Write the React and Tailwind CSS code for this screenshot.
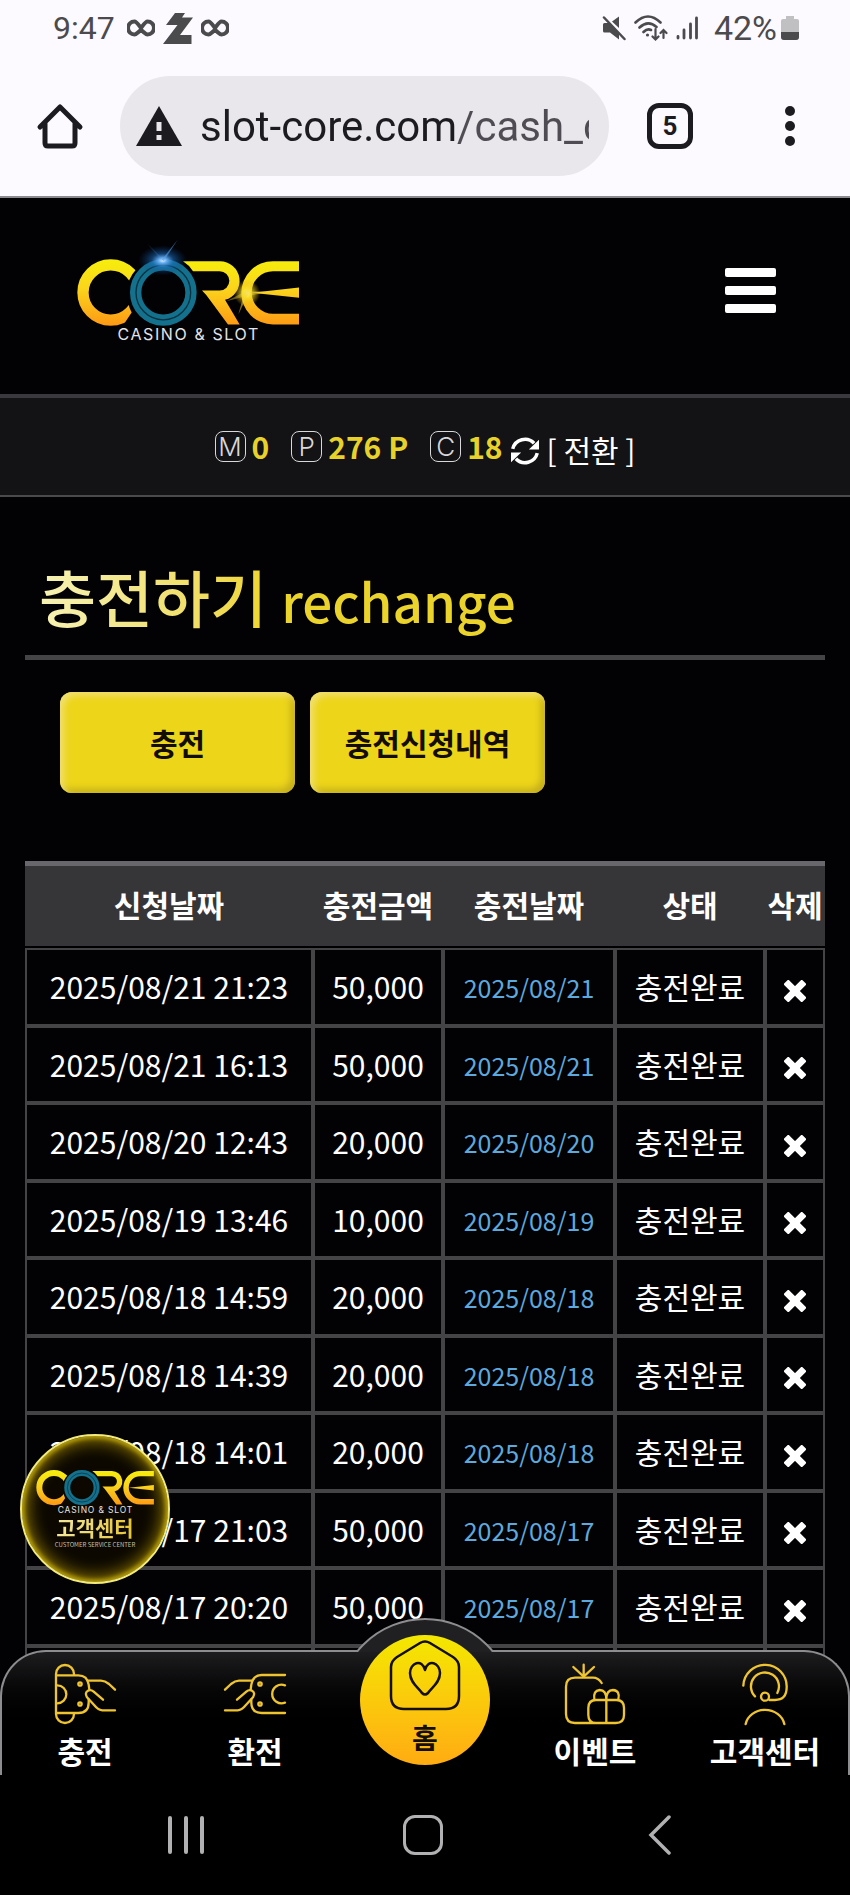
import React, { useId, useState } from "react";

const rows = [
  { requested: "2025/08/21 21:23", amount: "50,000", charged: "2025/08/21" },
  { requested: "2025/08/21 16:13", amount: "50,000", charged: "2025/08/21" },
  { requested: "2025/08/20 12:43", amount: "20,000", charged: "2025/08/20" },
  { requested: "2025/08/19 13:46", amount: "10,000", charged: "2025/08/19" },
  { requested: "2025/08/18 14:59", amount: "20,000", charged: "2025/08/18" },
  { requested: "2025/08/18 14:39", amount: "20,000", charged: "2025/08/18" },
  { requested: "2025/08/18 14:01", amount: "20,000", charged: "2025/08/18" },
  { requested: "2025/08/17 21:03", amount: "50,000", charged: "2025/08/17" },
  { requested: "2025/08/17 20:20", amount: "50,000", charged: "2025/08/17" },
];

const Logo = ({ className, flare }) => {
  const id = useId();

  return (
    <svg viewBox="100 50 690 320" className={className} role="img" aria-label="CORE">
      <defs>
        <linearGradient id={`${id}gold`} gradientUnits="userSpaceOnUse" x1="0" y1="118" x2="0" y2="314">
          <stop offset="0" stopColor="#f6ee0c" />
          <stop offset="0.45" stopColor="#fbd41c" />
          <stop offset="1" stopColor="#fd9a14" />
        </linearGradient>
        <radialGradient id={`${id}blue`}>
          <stop offset="0" stopColor="#eaf6ff" />
          <stop offset="0.15" stopColor="#6fb4f4" />
          <stop offset="0.45" stopColor="#1c6fc0" stopOpacity="0.55" />
          <stop offset="1" stopColor="#0b3f80" stopOpacity="0" />
        </radialGradient>
        <radialGradient id={`${id}sun`}>
          <stop offset="0" stopColor="#fffbd0" />
          <stop offset="0.3" stopColor="#f9e62a" stopOpacity="0.85" />
          <stop offset="1" stopColor="#e8b010" stopOpacity="0" />
        </radialGradient>
        <clipPath id={`${id}c`}>
          <path d="M100 100H240L290 146Q262 175 262 216Q262 250 276 276L240 330H100Z" />
        </clipPath>
      </defs>
      <circle
        cx="213"
        cy="216"
        r="83"
        fill="none"
        stroke={`url(#${id}gold)`}
        strokeWidth="34"
        clipPath={`url(#${id}c)`}
      />
      <g fill={`url(#${id}gold)`}>
        <path d="M430 122H540A59 59 0 0 1 556 238L600 312H565L512 240Q500 222 487 210H540A29 29 0 0 0 540 152H460Q448 133 430 122Z" />
        <path d="M778 122H700A95 95 0 0 0 700 312H778V280H700A64 64 0 0 1 700 152H778Z" />
        <path d="M636 217L778 201V232Z" />
      </g>
      <circle cx="371" cy="216" r="83" fill="none" stroke="#14718d" strokeWidth="34" />
      <circle cx="371" cy="216" r="82" fill="none" stroke="#06303f" strokeWidth="4" />
      {flare && (
        <g>
          <ellipse cx="369" cy="120" rx="74" ry="46" fill={`url(#${id}blue)`} />
          <path d="M366 118L414 58L372 122Z" fill="#5aa0e8" opacity="0.6" />
          <path d="M366 122L322 68L372 116Z" fill="#4b90dc" opacity="0.2" />
          <circle cx="622" cy="218" r="40" fill={`url(#${id}sun)`} />
          <path d="M638 166L626 220L596 282L614 216Z" fill="#f5d63a" opacity="0.5" />
          <path d="M560 242L618 212L700 214L624 226Z" fill="#f5d63a" opacity="0.4" />
        </g>
      )}
      <text
        x="447"
        y="358"
        textAnchor="middle"
        fontSize="48"
        fill="#e4e4e6"
        className="font-['Inter',sans-serif] tracking-widest"
      >
        CASINO &amp; SLOT
      </text>
    </svg>
  );
};

const Infinite = () => (
  <svg viewBox="0 0 28 18" className="w-7 h-[18px]" fill="none" stroke="#4b4a4d" strokeWidth="4">
    <path d="M14 9C11 5 9.500 2.500 7.500 2.500A6.300 6.300 0 0 0 7.500 15.500C9.500 15.500 11.500 12.500 14 11C16.500 12.500 18.500 15.500 20.500 15.500A6.300 6.300 0 0 0 20.500 2.500C18.500 2.500 17 5 14 9Z" />
  </svg>
);

const StatusBar = () => (
  <div className="flex items-center h-14 pl-[53px] pr-[51px] font-['Roboto',sans-serif] text-[32px] leading-8 text-[#4b4a4d]">
    <span className="mr-3">9:47</span>
    <Infinite />
    <svg viewBox="0 0 30 31" className="w-[30px] h-[31px] mx-2" fill="#4b4a4d">
      <path d="M12 0H22L19 4.500H30L17 22H28.500V31H0L14.500 12H3Z" />
    </svg>
    <Infinite />
    <div className="flex items-center ml-auto">
      <svg viewBox="0 0 24 26" className="w-6 h-[26px] mr-2">
        <path d="M1 9.500Q1 8 2.500 8H7L17 18V24.500L8 17.500H2.500Q1 17.500 1 16Z" fill="#4b4a4d" />
        <path d="M10 6.500L17 1.500V13Z" fill="#4b4a4d" />
        <path d="M2 2.500L22.500 24" stroke="#4b4a4d" strokeWidth="2.500" strokeLinecap="round" />
      </svg>
      <svg viewBox="0 0 34 26" className="w-[34px] h-[26px] mr-2" fill="none" stroke="#4b4a4d" strokeWidth="2.600" strokeLinecap="round">
        <path d="M1.500 7.500Q14 -4.500 26.500 7.500M5.500 12.500Q14 4.500 22.500 12M9.500 17Q13.500 13 17 15" />
        <circle cx="13.500" cy="20" r="1.600" fill="#4b4a4d" stroke="none" />
        <path d="M21.500 14V24.500M18.500 21.500L21.500 24.500L24.500 21.500M29.500 23V15.500M26.500 18L29.500 15L32.500 18" strokeWidth="2.200" />
      </svg>
      <svg viewBox="0 0 22 24" className="w-[22px] h-6 mr-4" stroke="#4b4a4d" strokeWidth="2.800" strokeLinecap="round">
        <path d="M2 20.500V22M8 14V22M14.500 8V22M20.500 2V22" />
      </svg>
      <span className="text-[34px]">42%</span>
      <svg viewBox="0 0 18 24" className="w-[18px] h-6 ml-1">
        <path d="M5 0H13V3H16Q18 3 18 5V21Q18 24 15 24H3Q0 24 0 21V5Q0 3 2 3H5Z" fill="#c0bfc2" />
        <path d="M0 16H18V21Q18 24 15 24H3Q0 24 0 21Z" fill="#4b4a4d" />
      </svg>
    </div>
  </div>
);

const BrowserBar = () => {
  const [url, setUrl] = useState("slot-core.com/cash_charge");

  return (
    <div className="flex items-center h-[142px] pl-9 pr-[55px] border-b-2 border-[#8b8a8e]">
      <button type="button" aria-label="Home" className="shrink-0 mr-9">
        <svg viewBox="0 0 48 48" className="w-12 h-12" fill="none" stroke="#1c1b1f" strokeWidth="5" strokeLinecap="round" strokeLinejoin="round">
          <path d="M4 25L24 5L44 25M9 21V41Q9 44 12 44H36Q39 44 39 41V21" />
        </svg>
      </button>
      <div className="flex items-center flex-1 min-w-0 h-[100px] rounded-full bg-[#e9e7ec] pl-4 pr-5">
        <svg viewBox="0 0 46 40" className="w-[46px] h-10 mr-[18px] shrink-0">
          <path d="M23 0L46 40H0Z" fill="#1c1b1f" />
          <path d="M20.500 16H25.500V25H20.500ZM20.500 29H25.500V34H20.500Z" fill="#e9e7ec" />
        </svg>
        <input
          type="text"
          aria-label="Address"
          value={url}
          onChange={(e) => setUrl(e.target.value)}
          className="flex-1 min-w-0 h-14 font-['Roboto',sans-serif] text-[42px] bg-transparent bg-linear-to-r from-[#1c1b1f] from-[257px] to-[#4f4d53] to-[257px] bg-clip-text text-transparent outline-none"
        />
      </div>
      <button
        type="button"
        aria-label="Tabs"
        className="flex items-center justify-center shrink-0 w-[46px] h-[46px] ml-[38px] mr-[92px] border-[5px] border-[#1c1b1f] rounded-xl font-['Roboto',sans-serif] font-bold text-[26px] text-[#1c1b1f]"
      >
        5
      </button>
      <button type="button" aria-label="More" className="grid gap-[5px] shrink-0">
        <span className="w-[10px] h-[10px] rounded-full bg-[#1c1b1f]" />
        <span className="w-[10px] h-[10px] rounded-full bg-[#1c1b1f]" />
        <span className="w-[10px] h-[10px] rounded-full bg-[#1c1b1f]" />
      </button>
    </div>
  );
};

const Balance = ({ letter, value }) => (
  <div className="flex items-center gap-[6px]">
    <span className="flex items-center justify-center w-[31px] h-[31px] border border-[#d8d8da] rounded-lg font-['Inter',sans-serif] font-light text-[26px] leading-none text-[#d8d8da]">
      {letter}
    </span>
    <strong className="pb-0.5 font-bold text-[#e8d22a]">{value}</strong>
  </div>
);

const RefreshIcon = () => (
  <svg viewBox="0 0 80 80" className="w-7 h-7 mt-1" fill="none" stroke="white" strokeWidth="10">
    <path d="M5 34A36 36 0 0 1 66 18M75 46A36 36 0 0 1 14 62" />
    <path d="M80 8V36H51ZM0 72V44H29Z" fill="white" stroke="none" />
  </svg>
);

const ChargeIcon = () => (
  <>
    <path d="M3 150V30A27 27 0 0 1 57 30M3 150A27 27 0 0 0 57 150M3 34H70Q97 34 101 62L103 76M3 147H70Q101 146 101 116V106" />
    <path d="M7 64A27 27 0 0 1 7 118M98 50H138Q150 50 162 60L180 77M180 139H142Q130 139 118 124L96 100Q88 86 99 80Q108 76 116 83L144 107" />
    <circle cx="75" cy="60" r="5" />
    <circle cx="75" cy="120" r="5" />
  </>
);

const ExchangeIcon = () => (
  <>
    <path d="M180 33H110Q83 34 79 62L77 76M180 147H110Q79 146 79 116V106M180 64A28 28 0 1 0 180 116" />
    <path d="M82 50H42Q30 50 18 60L0 77M0 139H38Q50 139 62 124L84 100Q92 86 81 80Q72 76 64 83L36 107" />
    <circle cx="105" cy="60" r="5" />
    <circle cx="105" cy="120" r="5" />
  </>
);

const EventIcon = () => (
  <>
    <path d="M110 57Q100 41 84 41H30Q3 41 3 68V150Q3 177 30 177H152Q177 177 177 153V132Q177 108 154 108H93Q70 108 70 132V153Q70 177 93 177M124 108V177" />
    <path d="M124 106Q124 78 104 78Q84 80 88 106M124 106Q124 78 144 78Q166 80 160 106M56 2V38M25 9L56 38L87 9" />
  </>
);

const SupportIcon = () => (
  <>
    <path d="M25 65A65 65 0 0 1 155 70Q155 108 120 108H103M60 97A42 42 0 1 1 127 87M32 180A59 52 0 0 1 148 180" />
    <circle cx="90" cy="98" r="12" />
  </>
);

const MenuItem = ({ label, icon: Icon }) => (
  <a href="#" className="flex flex-col items-center pt-[14px]">
    <svg
      viewBox="0 0 180 180"
      className="w-[60px] h-[60px] overflow-visible"
      fill="none"
      stroke="#efc431"
      strokeWidth="7"
      strokeLinecap="round"
      strokeLinejoin="round"
    >
      <Icon />
    </svg>
    <span className="mt-[6px] font-bold text-[30px] leading-10">{label}</span>
  </a>
);

const BottomMenu = () => (
  <nav className="absolute bottom-0 inset-x-0 h-[125px] text-white">
    <div className="h-full rounded-t-[46px] border-x-2 border-t-2 border-[#8d8d8f] bg-linear-to-b from-[#1d1c1e] to-black to-70%" />
    {/* raised arch behind the home button */}
    <div className="absolute left-1/2 -top-8 -translate-x-1/2 w-44 h-[34px] overflow-hidden">
      <div className="w-44 h-44 rounded-full border-2 border-[#8d8d8f] bg-[#202022]" />
    </div>
    <div className="absolute inset-0 grid grid-cols-5">
      <MenuItem label="충전" icon={ChargeIcon} />
      <MenuItem label="환전" icon={ExchangeIcon} />
      <a
        href="#"
        className="flex flex-col items-center justify-self-center -mt-[15px] pt-1 w-[130px] h-[130px] rounded-full bg-linear-to-b from-[#f3e800] to-[#ffab12] text-[#140e00]"
      >
        <svg viewBox="0 0 72 72" className="w-[72px] h-[72px]" fill="none" stroke="#140e00" strokeWidth="2.500" strokeLinecap="round" strokeLinejoin="round">
          <path d="M31 4Q36 1 41 4L64 18Q70 22 70 28V57Q70 70 57 70H15Q2 70 2 57V28Q2 22 8 18Z" />
          <path d="M36 31C33 19 21 24 21 34C21 44 30 49 33 54Q36 57 39 54C42 49 51 44 51 34C51 24 39 19 36 31Z" />
        </svg>
        <span className="mt-[6px] font-bold text-[28px] leading-10">홈</span>
      </a>
      <MenuItem label="이벤트" icon={EventIcon} />
      <MenuItem label="고객센터" icon={SupportIcon} />
    </div>
  </nav>
);

const ServiceBadge = () => (
  <a
    href="#"
    className="absolute left-5 bottom-[191px] flex flex-col items-center w-[150px] h-[150px] pt-[22px] rounded-full border-2 border-[#f3ea7c] bg-[#0c0800] shadow-[inset_0_0_18px_4px_#a08600,inset_0_0_4px_2px_#f0dc20]"
  >
    <Logo className="w-[122px] h-[57px]" />
    <span className="font-bold text-[21px] leading-6 bg-linear-to-r from-[#f3e79a] to-[#e6c52a] bg-clip-text text-transparent">
      고객센터
    </span>
    <span className="text-[6px] leading-3 text-[#c5c0aa] whitespace-nowrap">CUSTOMER SERVICE CENTER</span>
  </a>
);

const HistoryTable = () => (
  <table className="w-full mt-[68px] table-fixed border-separate border-spacing-0 text-center text-[30px] leading-10 text-white">
    <colgroup>
      <col />
      <col className="w-[130px]" />
      <col className="w-[172px]" />
      <col className="w-[150px]" />
      <col className="w-[60px]" />
    </colgroup>
    <thead>
      <tr className="h-[87px]">
        {["신청날짜", "충전금액", "충전날짜", "상태", "삭제"].map((title) => (
          <th
            key={title}
            scope="col"
            className="p-0 pb-1 border-t-[5px] border-t-[#68676b] border-b-2 border-b-black bg-[#363538] bg-clip-padding font-bold whitespace-nowrap"
          >
            {title}
          </th>
        ))}
      </tr>
    </thead>
    <tbody className="[&_td]:p-0 [&_td]:pb-0.5 [&_td]:border-2 [&_td]:border-[#444346]">
      {rows.map((row) => (
        <tr key={row.requested} className="odd:h-[78px] even:h-[77px]">
          <td>{row.requested}</td>
          <td>{row.amount}</td>
          <td>
            <span className="text-[25px] text-[#5da9dd]">{row.charged}</span>
          </td>
          <td>충전완료</td>
          <td>
            <button type="button" aria-label="삭제" className="align-middle">
              <svg viewBox="0 0 22 22" className="w-[22px] h-[22px]" fill="white">
                <rect x="-2" y="7.500" width="26" height="7" rx="1.500" transform="rotate(45 11 11)" />
                <rect x="-2" y="7.500" width="26" height="7" rx="1.500" transform="rotate(-45 11 11)" />
              </svg>
            </button>
          </td>
        </tr>
      ))}
      <tr className="h-3">
        <td />
        <td />
        <td />
        <td />
        <td />
      </tr>
    </tbody>
  </table>
);

const SystemNav = () => (
  <div className="flex justify-center h-[120px] pr-1 shrink-0 bg-black">
    <div className="grid grid-cols-3 w-[84%] place-items-center">
      <button type="button" aria-label="Recents" className="flex gap-3">
        <span className="w-1 h-[38px] rounded-full bg-[#b1b0b2]" />
        <span className="w-1 h-[38px] rounded-full bg-[#b1b0b2]" />
        <span className="w-1 h-[38px] rounded-full bg-[#b1b0b2]" />
      </button>
      <button type="button" aria-label="Home screen" className="w-10 h-10 border-[3px] border-[#b1b0b2] rounded-xl" />
      <button type="button" aria-label="Back">
        <svg viewBox="0 0 24 40" className="w-6 h-10" fill="none" stroke="#b1b0b2" strokeWidth="3.500" strokeLinecap="round">
          <path d="M21 2L3 20L21 38" />
        </svg>
      </button>
    </div>
  </div>
);

const App = () => {
  return (
    <div className="flex flex-col h-screen overflow-hidden bg-black font-['Noto_Sans_CJK_KR',sans-serif]">
      <header className="shrink-0 bg-[#fcfaff]">
        <StatusBar />
        <BrowserBar />
      </header>

      <div className="relative flex-1 min-h-0 overflow-hidden bg-[#020104]">
        <div className="flex items-center justify-between h-[196px] pl-[73px] pr-[74px] pb-3">
          <a href="#">
            <Logo flare className="w-[230px] h-[107px]" />
          </a>
          <button type="button" aria-label="Menu" className="grid gap-[9px]">
            <span className="w-[51px] h-[9px] rounded-xs bg-white" />
            <span className="w-[51px] h-[9px] rounded-xs bg-white" />
            <span className="w-[51px] h-[9px] rounded-xs bg-white" />
          </button>
        </div>

        <div className="flex items-center justify-center gap-[22px] h-[103px] border-t-4 border-t-[#39383c] border-b-2 border-b-[#4a494c] bg-[#131215] text-[30px] leading-10">
          <Balance letter="M" value="0" />
          <Balance letter="P" value="276 P" />
          <div className="flex items-center gap-2">
            <Balance letter="C" value="18" />
            <button type="button" className="flex items-center gap-2 pt-1 text-white">
              <RefreshIcon />[ 전환 ]
            </button>
          </div>
        </div>

        <main className="px-[25px]">
          <h1 className="pt-11 h-[163px] pl-[14px] border-b-[5px] border-[#444346] font-medium text-[62px] leading-[110px]">
            <span className="bg-linear-to-r from-[#f6f2b4] to-[#eed52a] bg-clip-text text-transparent">충전하기</span>{" "}
            <span className="text-[53px] text-[#ead32a]">rechange</span>
          </h1>
          <div className="flex gap-[15px] mt-8 pl-[35px]">
            {["충전", "충전신청내역"].map((label) => (
              <button
                key={label}
                type="button"
                className="w-[235px] h-[101px] rounded-xl bg-[#edd51a] font-bold text-[30px] text-[#120d00] shadow-[inset_4px_4px_6px_#f0e070,inset_-4px_-4px_7px_#c4ae1c]"
              >
                {label}
              </button>
            ))}
          </div>
          <HistoryTable />
        </main>

        <ServiceBadge />
        <BottomMenu />
      </div>

      <SystemNav />
    </div>
  );
};

export default App;
